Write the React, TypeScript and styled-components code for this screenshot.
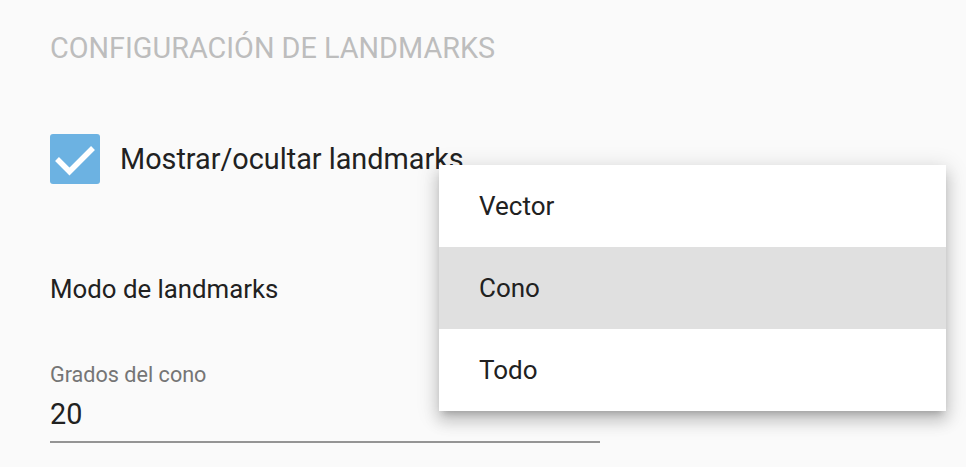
import React from "react";
import styled, { createGlobalStyle } from "styled-components";

const GlobalStyle = createGlobalStyle`
  html, body {
    margin: 0;
    padding: 0;
    background: #fafafa;
    font-family: Roboto, "Liberation Sans", sans-serif;
    overflow: hidden;
  }
`;

const Page = styled.div`
  position: relative;
  width: 966px;
  height: 467px;
  background: #fafafa;
  padding: 28px 0 0 50px;
  box-sizing: border-box;
`;

const Title = styled.h2`
  margin: 0;
  font-size: 28.8px;
  font-weight: 400;
  line-height: 40px;
  color: #bdbdbd;
`;

const CheckRow = styled.label`
  display: flex;
  align-items: center;
  gap: 20px;
  margin-top: 66px;
  height: 50px;
`;

const Box = styled.span<{ $checked: boolean }>`
  width: 50px;
  height: 50px;
  border-radius: 3px;
  background: ${(p) => (p.$checked ? "#6cb2e2" : "transparent")};
  display: block;
`;

const CheckText = styled.span`
  font-size: 28.8px;
  color: #212121;
`;

const FieldLabel = styled.div`
  margin-top: 90px;
  font-size: 25.8px;
  line-height: 30px;
  color: #212121;
`;

const TextField = styled.div`
  margin-top: 58px;
  width: 550px;
  display: flex;
  flex-direction: column;
  border-bottom: 2px solid #949494;
`;

const SmallLabel = styled.span`
  font-size: 21.6px;
  line-height: 26px;
  color: #757575;
`;

const Value = styled.span`
  margin-top: 6px;
  font-size: 28.8px;
  line-height: 40px;
  color: #212121;
  padding-bottom: 7px;
`;

const Menu = styled.ul`
  position: absolute;
  left: 439px;
  top: 165px;
  width: 507px;
  margin: 0;
  padding: 0;
  list-style: none;
  background: #fff;
  box-shadow: 0 10px 14px 1px rgba(0, 0, 0, 0.14), 0 4px 20px 3px rgba(0, 0, 0, 0.12),
    0 6px 7px -4px rgba(0, 0, 0, 0.2);
`;

const Item = styled.li<{ $active?: boolean }>`
  height: 82px;
  display: flex;
  align-items: center;
  padding-left: 40px;
  font-size: 26px;
  color: #212121;
  background: ${(p) => (p.$active ? "#e0e0e0" : "#fff")};
`;

const options = ["Vector", "Cono", "Todo"];

export default function App() {
  return (
    <>
      <GlobalStyle />
      <Page>
        <Title>CONFIGURACIÓN DE LANDMARKS</Title>
        <CheckRow>
          <Box $checked>
            <svg width="50" height="50" viewBox="0 0 50 50">
              <path d="M7 25L19.5 37.5L43 14" fill="none" stroke="#fff" strokeWidth="5.5" />
            </svg>
          </Box>
          <CheckText>Mostrar/ocultar landmarks</CheckText>
        </CheckRow>
        <FieldLabel>Modo de landmarks</FieldLabel>
        <TextField>
          <SmallLabel>Grados del cono</SmallLabel>
          <Value>20</Value>
        </TextField>
        <Menu>
          {options.map((o) => (
            <Item key={o} $active={o === "Cono"}>
              {o}
            </Item>
          ))}
        </Menu>
      </Page>
    </>
  );
}
